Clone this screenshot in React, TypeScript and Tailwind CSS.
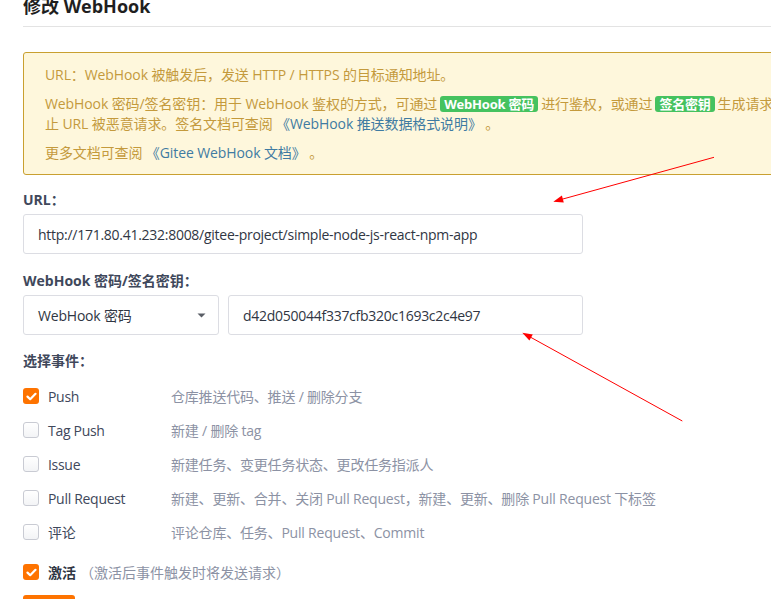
import React from "react";

const font = { fontFamily: '"Open Sans", "Noto Sans CJK SC", sans-serif' };

function Check({ checked }: { checked?: boolean }) {
  if (checked) {
    return (
      <span className="flex h-[16px] w-[16px] shrink-0 items-center justify-center rounded-[3px] bg-[#fe7300]">
        <svg width="11" height="9" viewBox="0 0 11 9">
          <path d="M1.5 4.6 L4.2 7.2 L9.5 1.8" fill="none" stroke="#fff" strokeWidth="2.2" strokeLinecap="round" strokeLinejoin="round" />
        </svg>
      </span>
    );
  }
  return <span className="h-[16px] w-[16px] shrink-0 rounded-[3px] border border-[#c9cbd3] bg-gradient-to-b from-white to-[#f3f4f6]" />;
}

const events: { label: string; desc: string; checked?: boolean }[] = [
  { label: "Push", desc: "仓库推送代码、推送 / 删除分支", checked: true },
  { label: "Tag Push", desc: "新建 / 删除 tag" },
  { label: "Issue", desc: "新建任务、变更任务状态、更改任务指派人" },
  { label: "Pull Request", desc: "新建、更新、合并、关闭 Pull Request，新建、更新、删除 Pull Request 下标签" },
  { label: "评论", desc: "评论仓库、任务、Pull Request、Commit" },
];

function Badge({ children }: { children: React.ReactNode }) {
  return (
    <span className="mx-[3px] inline-block rounded-[3px] bg-[#45c25f] px-[4px] text-[13px] font-bold leading-[16px] tracking-[-0.2px] text-white">
      {children}
    </span>
  );
}

export default function App() {
  return (
    <div className="relative h-[599px] w-[771px] overflow-hidden bg-white" style={font}>
      <div className="w-[1000px] pl-[23px]">
        <div className="mt-[-7px] w-[748px] border-b border-[#e3e3e3] pb-[7px]">
          <h2 className="text-[18px] font-bold leading-[26px] text-[#1f1f1f]">修改 WebHook</h2>
        </div>

        <div className="mt-[25px] w-[900px] rounded-[3px] border border-[#c9a030] bg-[#fef7dc] pb-[11px] pl-[21px] pt-[12px] text-[14px] leading-[20px] tracking-[-0.1px] text-[#c49a3c]">
          <p className="mb-[9px]">URL：WebHook 被触发后，发送 HTTP / HTTPS 的目标通知地址。</p>
          <p className="mb-[9px] whitespace-nowrap">
            WebHook 密码/签名密钥：用于 WebHook 鉴权的方式，可通过<Badge>WebHook 密码</Badge>进行鉴权，或通过<Badge>签名密钥</Badge>生成请求签名，防
            <br />
            止 URL 被恶意请求。签名文档可查阅 <span className="text-[#3f7ba2]">《WebHook 推送数据格式说明》</span> 。
          </p>
          <p>
            更多文档可查阅 <span className="text-[#3f7ba2]">《Gitee WebHook 文档》</span> 。
          </p>
        </div>

        <div className="mt-[15px] text-[14px] font-bold leading-[20px] text-[#40485b]">URL：</div>
        <div className="mt-[4px] flex h-[40px] w-[560px] items-center rounded-[3px] border border-[#dcdde3] px-[14px] text-[14px] tracking-[-0.27px] text-[#303643]">
          http://171.80.41.232:8008/gitee-project/simple-node-js-react-npm-app
        </div>

        <div className="mt-[17px] text-[14px] font-bold leading-[20px] text-[#40485b]">WebHook 密码/签名密钥：</div>
        <div className="mt-[4px] flex w-[560px] gap-[9px]">
          <div className="flex h-[40px] w-[196px] items-center justify-between rounded-[3px] border border-[#dcdde3] pl-[14px] pr-[12px] text-[14px] tracking-[-0.2px] text-[#303643]">
            <span>WebHook 密码</span>
            <svg width="9" height="5" viewBox="0 0 9 5">
              <path d="M0.5 0.5 L8.5 0.5 L4.5 4.5 Z" fill="#5a5e66" />
            </svg>
          </div>
          <div className="flex h-[40px] flex-1 items-center rounded-[3px] border border-[#dcdde3] px-[14px] text-[14px] tracking-[-0.27px] text-[#303643]">
            d42d050044f337cfb320c1693c2c4e97
          </div>
        </div>

        <div className="mt-[16px] text-[14px] font-bold leading-[20px] text-[#40485b]">选择事件：</div>
        <div className="mt-[8px] flex flex-col">
          {events.map((e) => (
            <div key={e.label} className="flex h-[34px] items-center text-[14px] tracking-[-0.2px]">
              <Check checked={e.checked} />
              <span className="ml-[9px] w-[123px] text-[#40485b] tracking-[-0.3px]">{e.label}</span>
              <span className="whitespace-nowrap text-[#8c92a4]">{e.desc}</span>
            </div>
          ))}
        </div>

        <div className="mt-[6px] flex h-[34px] items-center text-[14px]">
          <Check checked />
          <span className="ml-[9px] font-semibold text-[#303643]">激活</span>
          <span className="ml-[4px] text-[#8c92a4]">（激活后事件触发时将发送请求）</span>
        </div>

        <div className="mt-[6px] h-[30px] w-[52px] rounded-[3px] bg-[#fe7300]" />
      </div>

      <svg className="pointer-events-none absolute left-0 top-0" width="771" height="599" viewBox="0 0 771 599">
        <line x1="714" y1="157.3" x2="560" y2="199.8" stroke="#ff0000" strokeWidth="1" />
        <polygon points="553.3,201.7 563.8,202.6 561.9,195.4" fill="#ff0000" />
        <line x1="682.3" y1="421" x2="528" y2="335.8" stroke="#ff0000" strokeWidth="1" />
        <polygon points="522.3,332.7 529.4,340.6 532.8,334.4" fill="#ff0000" />
      </svg>
    </div>
  );
}
